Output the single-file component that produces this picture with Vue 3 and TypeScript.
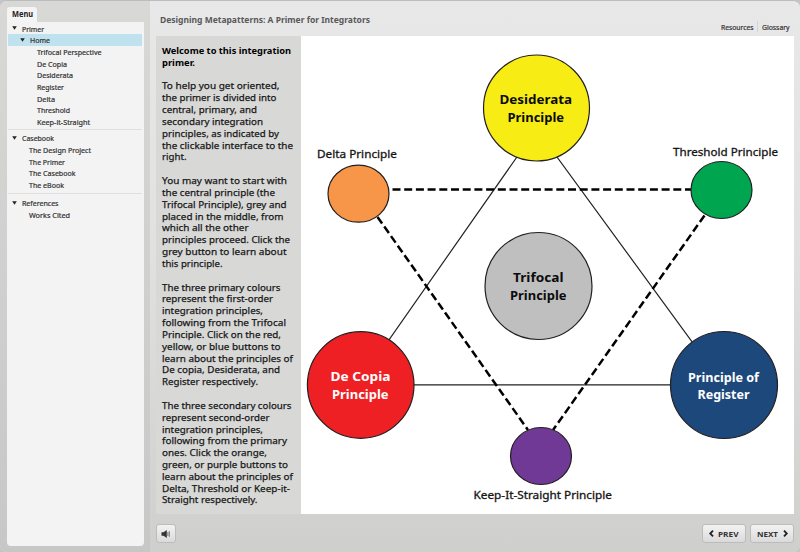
<script setup lang="ts">
interface MenuRow { label: string; level: number; parent?: boolean; active?: boolean; w: number }
interface TextLine { text: string; w: number }
interface Node { id: string; cx: number; cy: number; rx: number; ry: number; fill: string }
interface Label { text: string; x: number; y: number; w: number; kind: string }

const groups: MenuRow[][] = [
  [
    { label: 'Primer', level: 0, parent: true, w: 22 },
    { label: 'Home', level: 1, parent: true, active: true, w: 20 },
    { label: 'Trifocal Perspective', level: 2, w: 64.5 },
    { label: 'De Copia', level: 2, w: 30 },
    { label: 'Desiderata', level: 2, w: 36 },
    { label: 'Register', level: 2, w: 27 },
    { label: 'Delta', level: 2, w: 18 },
    { label: 'Threshold', level: 2, w: 33 },
    { label: 'Keep-it-Straight', level: 2, w: 53 },
  ],
  [
    { label: 'Casebook', level: 0, parent: true, w: 32 },
    { label: 'The Design Project', level: 1, w: 62 },
    { label: 'The Primer', level: 1, w: 36 },
    { label: 'The Casebook', level: 1, w: 46.5 },
    { label: 'The eBook', level: 1, w: 35 },
  ],
  [
    { label: 'References', level: 0, parent: true, w: 36.5 },
    { label: 'Works Cited', level: 1, w: 41 },
  ],
]

const heading: TextLine[] = [
  { text: 'Welcome to this integration', w: 129 },
  { text: 'primer.', w: 33 },
]

const paragraphs: TextLine[][] = [
  [
    { text: 'To help you get oriented,', w: 117.5 },
    { text: 'the primer is divided into', w: 114.5 },
    { text: 'central, primary, and', w: 95 },
    { text: 'secondary integration', w: 101 },
    { text: 'principles, as indicated by', w: 117 },
    { text: 'the clickable interface to the', w: 131 },
    { text: 'right.', w: 24.5 },
  ],
  [
    { text: 'You may want to start with', w: 125 },
    { text: 'the central principle (the', w: 113 },
    { text: 'Trifocal Principle), grey and', w: 124.5 },
    { text: 'placed in the middle, from', w: 121.5 },
    { text: 'which all the other', w: 86.5 },
    { text: 'principles proceed. Click the', w: 128 },
    { text: 'grey button to learn about', w: 124.5 },
    { text: 'this principle.', w: 60.5 },
  ],
  [
    { text: 'The three primary colours', w: 118.5 },
    { text: 'represent the first-order', w: 111 },
    { text: 'integration principles,', w: 101 },
    { text: 'following from the Trifocal', w: 124 },
    { text: 'Principle. Click on the red,', w: 119 },
    { text: 'yellow, or blue buttons to', w: 118.5 },
    { text: 'learn about the principles of', w: 131 },
    { text: 'De copia, Desiderata, and', w: 118 },
    { text: 'Register respectively.', w: 96 },
  ],
  [
    { text: 'The three secondary colours', w: 129.5 },
    { text: 'represent second-order', w: 107.5 },
    { text: 'integration principles,', w: 101 },
    { text: 'following from the primary', w: 125 },
    { text: 'ones. Click the orange,', w: 105 },
    { text: 'green, or purple buttons to', w: 126 },
    { text: 'learn about the principles of', w: 131 },
    { text: 'Delta, Threshold or Keep-it-', w: 128 },
    { text: 'Straight respectively.', w: 95.5 },
  ],
]

const nodes: Node[] = [
  { id: 'desiderata', cx: 536.5, cy: 108, rx: 53, ry: 53, fill: '#f7ec13' },
  { id: 'copia', cx: 360.7, cy: 385, rx: 53.3, ry: 53.3, fill: '#ee2024' },
  { id: 'register', cx: 724, cy: 385, rx: 53.5, ry: 53.5, fill: '#1c487c' },
  { id: 'trifocal', cx: 538.5, cy: 286, rx: 53.5, ry: 53.5, fill: '#c0bfc0' },
  { id: 'delta', cx: 358.5, cy: 193.7, rx: 30.5, ry: 28.5, fill: '#f79548' },
  { id: 'threshold', cx: 721.5, cy: 190, rx: 30.5, ry: 28.5, fill: '#00a54f' },
  { id: 'straight', cx: 541, cy: 456, rx: 30.5, ry: 28.5, fill: '#6f3995' },
]

const labels: Label[] = [
  { text: 'Desiderata', x: 499.5, y: 104, w: 72.5, kind: 'dark' },
  { text: 'Principle', x: 507.5, y: 121.5, w: 56.5, kind: 'dark' },
  { text: 'Trifocal', x: 513, y: 282, w: 50.5, kind: 'dark' },
  { text: 'Principle', x: 510, y: 299.5, w: 56.5, kind: 'dark' },
  { text: 'De Copia', x: 330.5, y: 381, w: 60, kind: 'light' },
  { text: 'Principle', x: 332, y: 398.5, w: 56.5, kind: 'light' },
  { text: 'Principle of', x: 688, y: 382, w: 71, kind: 'light' },
  { text: 'Register', x: 697.5, y: 398.5, w: 52, kind: 'light' },
  { text: 'Delta Principle', x: 317, y: 158.3, w: 80, kind: 'caption' },
  { text: 'Threshold Principle', x: 673, y: 155.8, w: 105, kind: 'caption' },
  { text: 'Keep-It-Straight Principle', x: 473.5, y: 499, w: 138.5, kind: 'caption' },
]
</script>

<template>
  <div class="player">
    <aside class="sidebar">
      <div class="tab"><svg class="line" width="24" height="13"><text x="0" y="9.5" textLength="21" lengthAdjust="spacingAndGlyphs">Menu</text></svg></div>
      <nav class="menu">
        <ul v-for="(group, g) in groups" :key="g" class="group">
          <li v-for="row in group" :key="row.label" class="row" :class="['level' + row.level, { active: row.active }]">
            <svg v-if="row.parent" class="arrow" width="5" height="4" viewBox="0 0 5 4"><path d="M.2 .2H4.8L2.5 3.8Z" /></svg>
            <svg class="line" width="80" height="11"><text x="0" y="8.5" :textLength="row.w" lengthAdjust="spacingAndGlyphs">{{ row.label }}</text></svg>
          </li>
        </ul>
      </nav>
    </aside>
    <main class="main">
      <header class="header">
        <h1 class="title"><svg class="line" width="220" height="16"><text x="0" y="12" textLength="210" lengthAdjust="spacingAndGlyphs">Designing Metapatterns: A Primer for Integrators</text></svg></h1>
        <div class="links">
          <a><svg class="line" width="33" height="12"><text x="0" y="9" textLength="32.5" lengthAdjust="spacingAndGlyphs">Resources</text></svg></a>
          <a><svg class="line" width="28" height="12"><text x="0" y="9" textLength="27.5" lengthAdjust="spacingAndGlyphs">Glossary</text></svg></a>
        </div>
      </header>
      <section class="slide">
        <article class="article">
          <h2 class="para bold">
            <svg v-for="(line, i) in heading" :key="i" class="line" width="138" height="12"><text x="0" y="8.7" :textLength="line.w" lengthAdjust="spacingAndGlyphs">{{ line.text }}</text></svg>
          </h2>
          <p v-for="(para, p) in paragraphs" :key="p" class="para">
            <svg v-for="(line, i) in para" :key="i" class="line" width="138" height="12"><text x="0" y="8.7" :textLength="line.w" lengthAdjust="spacingAndGlyphs">{{ line.text }}</text></svg>
          </p>
        </article>
        <svg class="diagram" width="493" height="478" viewBox="301 36 493 478">
          <path class="solid" d="M536.5 129L357.5 384.8H723.5Z" />
          <path class="dashed" d="M392.5 189.5H691" />
          <path class="dashed" d="M377.5 217L528 430" />
          <path class="dashed" d="M704.5 215.5L553 430" />
          <ellipse v-for="n in nodes" :key="n.id" class="node" :cx="n.cx" :cy="n.cy" :rx="n.rx" :ry="n.ry" :fill="n.fill" />
          <text v-for="(l, i) in labels" :key="i" :class="l.kind" :x="l.x" :y="l.y" :textLength="l.w" lengthAdjust="spacingAndGlyphs">{{ l.text }}</text>
        </svg>
      </section>
      <footer class="footer">
        <button class="btn sound" aria-label="Volume">
          <svg width="10" height="10" viewBox="0 0 10 10"><path d="M.5 3.2H2.5L5.8 .9V9.1L2.5 6.8H.5Z" /><path class="wave" d="M6.9 3V7M8.3 2.2V7.8" /></svg>
        </button>
        <div class="nav">
          <button class="btn prev">
            <svg class="chev" width="5" height="7" viewBox="0 0 5 7"><path d="M4 .6L1.2 3.5L4 6.4" /></svg>
            <svg class="line" width="21" height="12"><text x="0" y="8.8" textLength="20.5" lengthAdjust="spacingAndGlyphs">PREV</text></svg>
          </button>
          <button class="btn next">
            <svg class="line" width="22" height="12"><text x="0" y="8.8" textLength="21" lengthAdjust="spacingAndGlyphs">NEXT</text></svg>
            <svg class="chev" width="5" height="7" viewBox="0 0 5 7"><path d="M1 .6L3.8 3.5L1 6.4" /></svg>
          </button>
        </div>
      </footer>
    </main>
  </div>
</template>

<style>
body { margin: 0; background: #c5c5c7; }
</style>

<style scoped>
* { box-sizing: border-box; }
.player { width: 800px; height: 552px; display: flex; overflow: hidden; border-top: 1px solid #bcbcbe; border-radius: 7px; background: #d8d9d7; font-family: "Noto Sans", "Open Sans", sans-serif; color: #333; }
.line { display: block; flex: none; overflow: visible; }
.line text { fill: currentColor; }
.sidebar { width: 150px; padding: 6px 6px 6px 7px; background: linear-gradient(#d8d9d7, #c6c7c6); display: flex; flex-direction: column; }
.tab { width: 30px; height: 15px; padding-left: 5px; border-radius: 3px 3px 0 0; background: #f4f4f4; font-size: 8px; font-weight: 700; color: #222; }
.menu { flex: 1; padding: 0 2px 0 1px; background: #f3f3f3; border-radius: 0 0 4px 4px; }
.group { list-style: none; margin: 0; padding: 0 0 1px; border-bottom: 1px solid #dfdfdf; }
.group + .group { padding: 2.5px 0 3px; }
.group:last-child { border: 0; }
.row { display: flex; align-items: center; height: 11.7px; font-size: 7px; }
.group:first-child .row:first-child { height: 12px; }
.row text, .links text { stroke: currentColor; stroke-width: .2px; }
.level0 { padding-left: 4px; gap: 4.5px; }
.level1 { padding-left: 21px; }
.level1 .arrow { margin-left: -9px; margin-right: 4.5px; }
.level2 { padding-left: 29px; }
.arrow { flex: none; fill: #222; }
.active { background: #c0e1ee; }
.main { width: 650px; display: flex; flex-direction: column; padding: 0 6px 0 6px; background: linear-gradient(#e9e8e9, #e1e1e1 45%, #cfcfce); }
.header { height: 35px; display: flex; justify-content: space-between; }
.title { margin: 10px 0 0 4px; font-size: 8.9px; font-weight: 700; color: #58585a; }
.links { display: flex; margin-top: 20px; padding-right: 4px; font-size: 7px; }
.links a + a { margin-left: 3px; padding-left: 4px; border-left: 1px solid #d5d5d5; height: 11px; }
.slide { height: 478px; display: flex; }
.article { width: 145px; padding: 9px 0 0 6px; background: #d8d9d7; color: #171717; }
.para { margin: 0 0 11.84px; font-size: 9.6px; font-weight: 400; }
.para .line { height: 11.84px; }
.para text { stroke: currentColor; stroke-width: .25px; }
.para.bold { font-weight: 700; color: #000; }
.para.bold text { stroke: none; }
.diagram { display: block; background: #fff; }
.solid { fill: none; stroke: #222; stroke-width: 1.2; }
.dashed { fill: none; stroke: #000; stroke-width: 2.5; stroke-dasharray: 8 3.7; }
.node { stroke: #231f20; stroke-width: 1.2; }
.dark, .light { font-size: 13.2px; font-weight: 700; fill: #0c0c0c; }
.light { fill: #fff; }
.caption { font-size: 11.1px; fill: #151515; stroke: #151515; stroke-width: .3px; }
.footer { height: 38px; padding-top: 10px; display: flex; justify-content: space-between; align-items: flex-start; }
.nav { display: flex; gap: 4px; }
.btn { height: 19px; margin: 0; padding: 0; display: flex; align-items: center; justify-content: center; gap: 4px; border: 1px solid #bcbcbc; border-radius: 3px; background: linear-gradient(#f3f3f3, #dadada); font-family: inherit; font-size: 7.8px; font-weight: 700; color: #333; }
.sound { width: 20px; fill: #333; }
.prev, .next { width: 44px; }
.wave { fill: none; stroke: #777; stroke-width: 1; }
.chev { fill: none; stroke: #222; stroke-width: 1.8; }
</style>
